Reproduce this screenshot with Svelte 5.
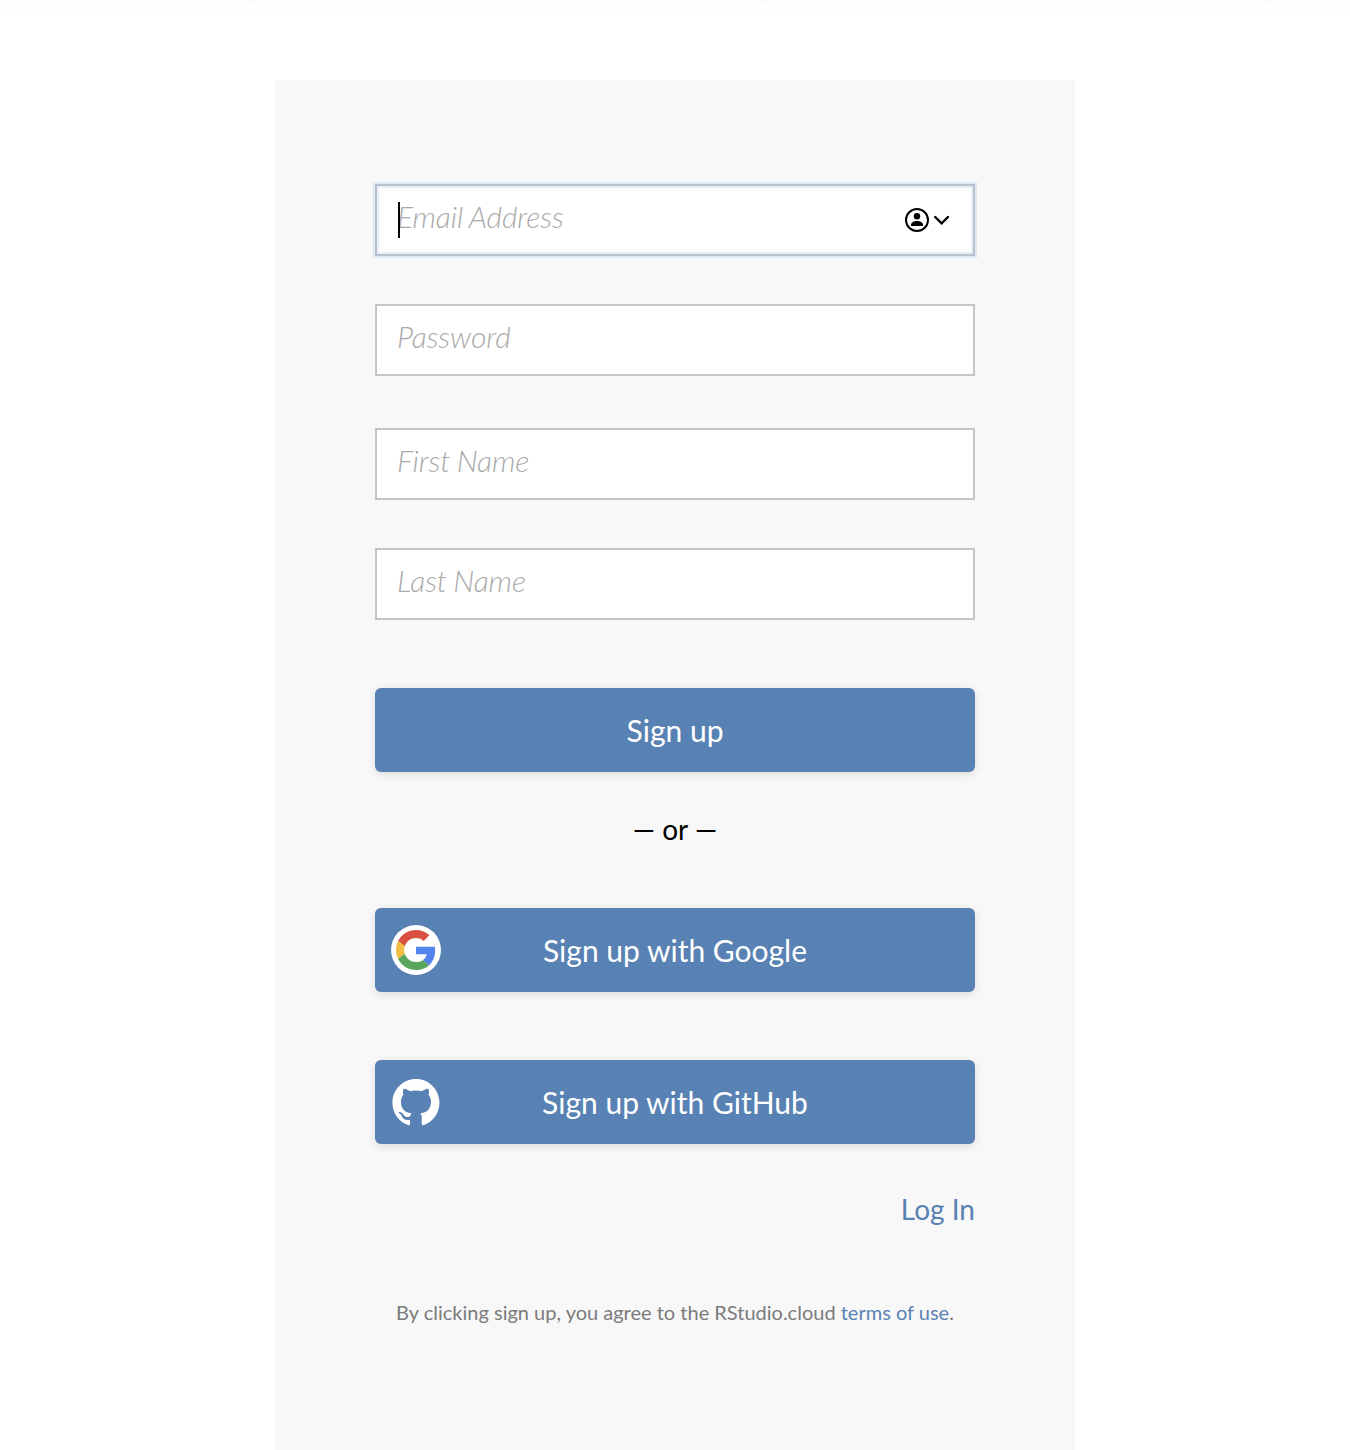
<script>
  const fields = [
    { label: 'Email Address', type: 'email', focused: true },
    { label: 'Password', type: 'password' },
    { label: 'First Name', type: 'text' },
    { label: 'Last Name', type: 'text' }
  ];
</script>

<main>
  <form class="panel" onsubmit={(e) => e.preventDefault()}>
    <div class="fields">
      {#each fields as field}
        <div class="field" class:focused={field.focused}>
          {#if field.focused}<span class="caret"></span>{/if}
          <input type={field.type} placeholder={field.label} aria-label={field.label} />
          {#if field.focused}
            <svg class="autofill" width="46" height="26" viewBox="0 0 46 26" fill="none" stroke="#000" stroke-width="2">
              <circle cx="13" cy="13" r="11" />
              <circle cx="13" cy="9.3" r="3.2" fill="#000" stroke="none" />
              <path d="M7 19v-1c0-2.600 3-4 6-4s6 1.400 6 4v1z" fill="#000" stroke="none" />
              <path d="M31.200 10l6.400 6.300L44 10" stroke-width="2.400" stroke-linecap="round" />
            </svg>
          {/if}
        </div>
      {/each}
    </div>

    <button type="button">Sign up</button>
    <div class="or">— or —</div>
    <button type="button" class="google">
      <span class="logo">
        <svg width="50" height="50" viewBox="0 0 50 50">
          <circle cx="25" cy="25" r="25" fill="#fff" />
          <g transform="translate(5 5) scale(.8333)">
            <path fill="#d85140" d="M24 9.500c3.540 0 6.710 1.220 9.210 3.600l6.850-6.850C35.900 2.380 30.470 0 24 0 14.620 0 6.510 5.380 2.560 13.220l7.980 6.190C12.430 13.720 17.740 9.500 24 9.500z" />
            <path fill="#5383ec" d="M46.980 24.550c0-1.570-.150-3.090-.380-4.550H24v9.020h12.940c-.580 2.960-2.260 5.480-4.780 7.180l7.730 6c4.510-4.180 7.090-10.360 7.090-17.650z" />
            <path fill="#f1bd42" d="M10.530 28.590c-.480-1.450-.760-2.990-.760-4.590s.270-3.140.760-4.590l-7.980-6.190C.920 16.460 0 20.120 0 24c0 3.880.920 7.540 2.560 10.780l7.970-6.190z" />
            <path fill="#58a55c" d="M24 48c6.480 0 11.930-2.130 15.890-5.810l-7.730-6c-2.150 1.450-4.920 2.300-8.160 2.300-6.260 0-11.570-4.220-13.470-9.910l-7.980 6.190C6.510 42.620 14.620 48 24 48z" />
          </g>
        </svg>
      </span>
      Sign up with Google
    </button>
    <button type="button" class="github">
      <span class="logo">
        <svg width="50" height="50" viewBox="0 0 50 50">
          <path transform="translate(1.400 2) scale(.482)" fill="#fff" d="M48.854 0C21.839 0 0 22 0 49.217c0 21.756 13.993 40.172 33.405 46.690 2.427.490 3.316-1.059 3.316-2.362 0-1.141-.080-5.052-.080-9.127-13.590 2.934-16.420-5.867-16.420-5.867-2.184-5.704-5.420-7.170-5.420-7.170-4.448-3.015.324-3.015.324-3.015 4.934.326 7.523 5.052 7.523 5.052 4.367 7.496 11.404 5.378 14.235 4.074.404-3.178 1.699-5.378 3.074-6.600-10.839-1.141-22.243-5.378-22.243-24.283 0-5.378 1.940-9.778 5.014-13.200-.485-1.222-2.184-6.275.486-13.038 0 0 4.125-1.304 13.426 5.052a46.970 46.970 0 0 1 12.214-1.630c4.125 0 8.330.571 12.213 1.630 9.302-6.356 13.427-5.052 13.427-5.052 2.670 6.763.970 11.816.485 13.038 3.155 3.422 5.015 7.822 5.015 13.200 0 18.905-11.404 23.060-22.324 24.283 1.780 1.548 3.316 4.481 3.316 9.126 0 6.600-.080 11.897-.080 13.526 0 1.304.890 2.853 3.316 2.364 19.412-6.520 33.405-24.935 33.405-46.691C97.707 22 75.788 0 48.854 0z" />
        </svg>
      </span>
      Sign up with GitHub
    </button>
    <div class="login"><a href="#login">Log In</a></div>
    <p>By clicking sign up, you agree to the RStudio.cloud <a href="#terms">terms of use</a>.</p>
  </form>
</main>

<style>
  :global(body) { margin: 0; background: #fff; }
  main {
    box-sizing: border-box;
    height: 1450px;
    padding-top: 80px;
    overflow: hidden;
    background: linear-gradient(#fbfbfb, #fefefe 8px, #fff 14px);
    font-family: Lato, sans-serif;
  }
  .panel {
    box-sizing: border-box;
    width: 800px;
    height: 1370px;
    margin: 0 auto;
    padding: 104px 100px 0;
    background: #f8f8f8;
  }
  .fields { display: grid; gap: 48px; margin-bottom: 68px; }
  .field {
    box-sizing: border-box;
    position: relative;
    display: flex;
    align-items: center;
    height: 72px;
    padding: 0 23px 0 20px;
    border: 2px solid #c6c6c6;
    background: #fff;
  }
  .field:nth-child(3) { margin-top: 4px; }
  .focused {
    border-color: #b8c1cd;
    box-shadow: 0 0 0 2px #e0e8f1, inset 0 0 0 2px #e6eef7;
  }
  input {
    flex: 1;
    min-width: 0;
    height: 36px;
    padding: 0 0 9px;
    border: 0;
    outline: 0;
    background: transparent;
    font: 30px/36px Lato, sans-serif;
    letter-spacing: -.08px;
    word-spacing: -1.2px;
  }
  input::placeholder { color: #a9a9a9; opacity: 1; font-style: italic; font-weight: 300; }
  .caret { position: absolute; left: 21px; top: 16px; width: 2px; height: 36px; background: #000; }
  .autofill { flex: none; }
  button {
    position: relative;
    display: block;
    width: 100%;
    height: 84px;
    padding: 0 0 1px;
    border: 0;
    border-radius: 6px;
    background: #5882b3;
    box-shadow: 0 2px 8px rgba(0, 0, 0, .12);
    color: #fff;
    font: 30px/36px Lato, sans-serif;
  }
  .logo { position: absolute; left: 16px; top: 17px; width: 50px; height: 50px; }
  .logo svg { display: block; }
  .or { height: 136px; color: #000; text-align: center; font-size: 28px; line-height: 115px; }
  .github { margin-top: 68px; }
  a { color: #5882b3; text-decoration: none; }
  .login { margin-top: 47px; text-align: right; font-size: 28px; line-height: 36px; }
  p { margin: 73px 0 0; text-align: center; color: #7b7b7b; font-size: 20px; line-height: 24px; }
</style>
